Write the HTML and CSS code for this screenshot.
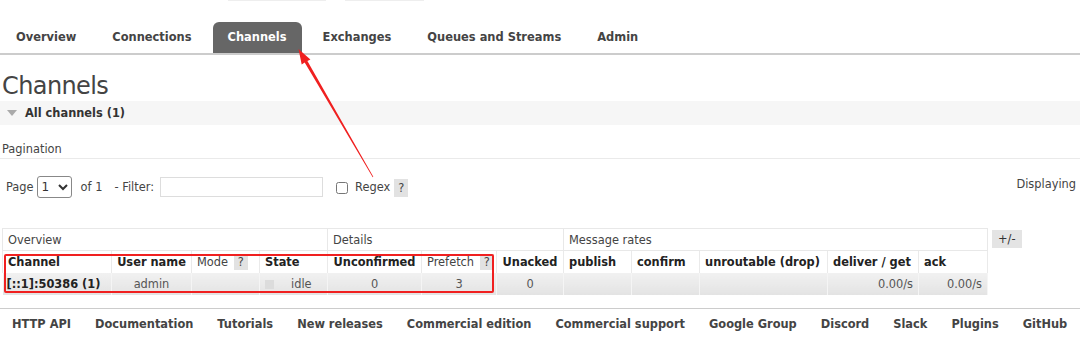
FILE: index.html
```html
<!DOCTYPE html>
<html lang="en">
<head>
    <meta charset="UTF-8">
    <meta name="viewport" content="width=device-width, initial-scale=1.0">
    <title>Channels</title>
    <link rel="stylesheet" href="styles.css">
</head>
<body>
    <div class="topbar">
        <span class="strip strip-a"></span>
        <span class="strip strip-b"></span>
    </div>

    <!-- Tabs -->
    <ul class="tabs">
        <li><a href="#">Overview</a></li>
        <li><a href="#">Connections</a></li>
        <li class="active"><a href="#">Channels</a></li>
        <li><a href="#">Exchanges</a></li>
        <li><a href="#">Queues and Streams</a></li>
        <li><a href="#">Admin</a></li>
    </ul>

    <h1>Channels</h1>

    <div class="section-head">
        <span class="triangle"></span>
        <span>All channels (1)</span>
    </div>

    <h3 class="pagination-title">Pagination</h3>

    <div class="filter-row">
        <div class="filter-left">
            <label for="page">Page</label>
            <select id="page" class="page-select">
                <option>1</option>
            </select>
            <span class="of">of 1</span>
            <label for="filter">- Filter:</label>
            <input type="text" id="filter" class="filter-input">
            <input type="checkbox" id="regex" class="regex-box">
            <label for="regex">Regex</label>
            <span class="help">?</span>
        </div>
        <div class="displaying">Displaying</div>
    </div>

    <!-- Table -->
    <div class="table-row">
        <div class="table-wrap">
            <table class="list">
                <colgroup>
                    <col style="width:109px"><col style="width:80px"><col style="width:68px"><col style="width:68px">
                    <col style="width:94px"><col style="width:75px"><col style="width:67px">
                    <col style="width:68px"><col style="width:68px"><col style="width:128px"><col style="width:91px"><col style="width:69px">
                </colgroup>
                <thead>
                    <tr class="group">
                        <th colspan="4">Overview</th>
                        <th colspan="3">Details</th>
                        <th colspan="5">Message rates</th>
                    </tr>
                    <tr class="cols">
                        <th>Channel</th>
                        <th class="center">User name</th>
                        <th class="plain">Mode <span class="help">?</span></th>
                        <th>State</th>
                        <th class="center">Unconfirmed</th>
                        <th class="plain">Prefetch <span class="help">?</span></th>
                        <th class="center">Unacked</th>
                        <th>publish</th>
                        <th>confirm</th>
                        <th>unroutable (drop)</th>
                        <th>deliver / get</th>
                        <th>ack</th>
                    </tr>
                </thead>
                <tbody>
                    <tr>
                        <td class="name">[::1]:50386 (1)</td>
                        <td class="center">admin</td>
                        <td></td>
                        <td class="state"><span class="state-dot"></span><abbr>idle</abbr></td>
                        <td class="center">0</td>
                        <td class="center">3</td>
                        <td class="center">0</td>
                        <td></td>
                        <td></td>
                        <td></td>
                        <td class="right">0.00/s</td>
                        <td class="right">0.00/s</td>
                    </tr>
                </tbody>
            </table>
            <div class="mark-box"></div>
        </div>
        <span class="toggle">+/-</span>
    </div>

    <!-- Footer -->
    <ul class="footer">
        <li><a href="#">HTTP API</a></li>
        <li><a href="#">Documentation</a></li>
        <li><a href="#">Tutorials</a></li>
        <li><a href="#">New releases</a></li>
        <li><a href="#">Commercial edition</a></li>
        <li><a href="#">Commercial support</a></li>
        <li><a href="#">Google Group</a></li>
        <li><a href="#">Discord</a></li>
        <li><a href="#">Slack</a></li>
        <li><a href="#">Plugins</a></li>
        <li><a href="#">GitHub</a></li>
    </ul>

    <!-- annotation arrow -->
    <svg class="arrow" width="1080" height="344" viewBox="0 0 1080 344">
        <polygon fill="#f02020" points="373.3,176.8 307.4,61.1 310.4,59.4 298.5,49 301.7,64.4 304.7,62.6 372.7,177.2"/>
    </svg>
</body>
</html>
```

FILE: styles.css
```css
body {
    font-family: "DejaVu Sans", Verdana, sans-serif;
    font-size: 11.4px;
    color: #444;
    margin: 0;
    padding: 0;
    position: relative;
    background: #fff;
}

a {
    text-decoration: none;
}

.topbar {
    display: flex;
    height: 2px;
    padding-left: 228px;
    gap: 19px;
}

.strip {
    display: block;
    height: 1px;
    background: #eee;
}

.strip-a { width: 98px; }
.strip-b { width: 79px; }

/* tabs */
.tabs {
    list-style: none;
    display: flex;
    margin: 20px 0 0 0;
    padding: 0 0 0 1px;
    border-bottom: 2px solid #ccc;
}

.tabs li {
    margin-right: 6px;
}

.tabs a {
    display: block;
    padding: 0 15px;
    line-height: 31px;
    font-size: 11.45px;
    font-weight: bold;
    color: #444;
    border-radius: 6px 6px 0 0;
}

.tabs .active a {
    background: #666;
    color: #fff;
}

h1 {
    font-size: 24px;
    font-weight: normal;
    letter-spacing: -0.6px;
    line-height: 29px;
    margin: 17px 0 0 2px;
    color: #444;
}

.section-head {
    display: flex;
    align-items: center;
    height: 24px;
    background: #f6f6f6;
    font-weight: bold;
    color: #333;
}

.triangle {
    width: 0;
    height: 0;
    margin: 0 8px 0 7px;
    border-left: 5px solid transparent;
    border-right: 5px solid transparent;
    border-top: 6px solid #aaa;
}

.pagination-title {
    font-size: 11.4px;
    font-weight: normal;
    line-height: 14px;
    margin: 17px 0 0 0;
    padding: 0 0 2px 2px;
    border-bottom: 1px solid #eaeaea;
}

.filter-row {
    display: flex;
    justify-content: space-between;
    align-items: center;
    margin-top: 17px;
    padding: 0 4px 0 6px;
}

.filter-left {
    display: flex;
    align-items: center;
}

.page-select {
    width: 35px;
    height: 22px;
    margin: 0 9px 0 3px;
    font-family: inherit;
    font-size: 12px;
    color: #333;
    border: 1px solid #888;
    border-radius: 3px;
    background: #fff;
}

.of {
    margin-right: 12px;
}

.filter-input {
    width: 163px;
    height: 20px;
    box-sizing: border-box;
    margin: 0 13px 0 6px;
    border: 1px solid #ddd;
    padding: 0 3px;
}

.regex-box {
    width: 12px;
    height: 12px;
    margin: 2px 7px 0 0;
}

.help {
    display: inline-block;
    background: #e2e2e2;
    color: #444;
    padding: 2px 3px;
    line-height: 14px;
    margin-left: 4px;
    font-weight: normal;
}

.filter-left .help {
    padding: 2px 4px;
    margin-top: 2px;
}

.displaying {
    margin-bottom: 6px;
}

/* table */
.table-row {
    display: flex;
    align-items: flex-start;
    margin: 30px 0 0 2px;
}

.table-wrap {
    position: relative;
}

table.list {
    border-collapse: collapse;
    table-layout: fixed;
    width: 985px;
}

table.list th, table.list td {
    height: 22px;
    padding: 0 5px;
    box-sizing: border-box;
    text-align: left;
    white-space: nowrap;
    overflow: hidden;
}

table.list tr.group th {
    font-weight: normal;
    border: 1px solid #e8e8e8;
    color: #444;
}

table.list tr.cols th {
    font-weight: bold;
    color: #222;
    border-left: 1px solid #eaeaea;
    border-right: 1px solid #eaeaea;
}

table.list tr.cols th.plain {
    font-weight: normal;
    color: #444;
}

table.list th.plain .help {
    padding: 1px 4px;
    margin-left: 2px;
}

table.list td {
    background: linear-gradient(#f1f1f1, #e3e3e3);
    color: #555;
    border-right: 1px solid #f5f5f5;
}

table.list .center {
    text-align: center;
}

table.list .right {
    text-align: right;
}

table.list td.name {
    font-weight: bold;
    color: #222;
    padding-left: 4px;
}

.state-dot {
    display: inline-block;
    width: 9px;
    height: 9px;
    background: #dcdcdc;
    vertical-align: -1px;
    margin-right: 17px;
}

abbr {
    text-decoration: none;
    border-bottom: 1px dotted #999;
}

.mark-box {
    position: absolute;
    left: 2px;
    top: 26px;
    width: 490px;
    height: 39px;
    box-sizing: border-box;
    border: 2px solid #f02020;
    border-radius: 2px;
}

.toggle {
    margin: 2px 0 0 4px;
    padding: 2px 6px;
    line-height: 14px;
    background: #e4e4e4;
    color: #333;
}

/* footer */
.footer {
    list-style: none;
    display: flex;
    margin: 13px 0 0 0;
    padding: 7px 0 0 0;
    border-top: 1px solid #ccc;
}

.footer a {
    display: block;
    padding: 0 12px;
    line-height: 16px;
    font-weight: bold;
    color: #444;
}

.arrow {
    position: absolute;
    left: 0;
    top: 0;
    pointer-events: none;
}
```
